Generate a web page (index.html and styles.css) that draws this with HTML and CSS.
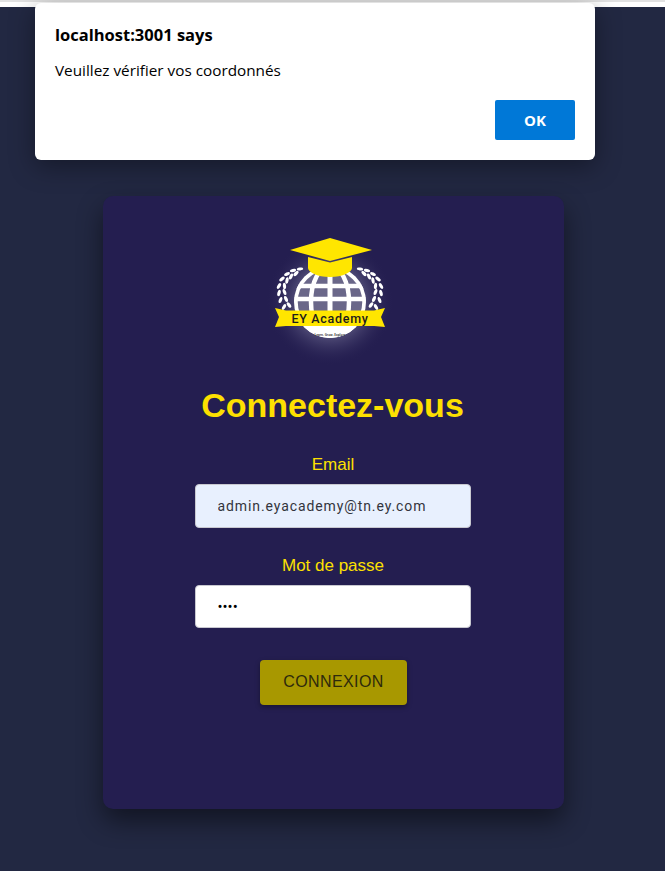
FILE: index.html

```html
<!DOCTYPE html>
<html lang="fr">
<head>
    <meta charset="UTF-8">
    <meta name="viewport" content="width=device-width, initial-scale=1.0">
    <title>EY Academy</title>
    <link rel="stylesheet" href="styles.css">
</head>
<body>
    <div class="browser-edge"></div>

    <div class="alert-box">
        <div class="alert-title">localhost:3001 says</div>
        <div class="alert-message">Veuillez vérifier vos coordonnés</div>
        <div class="alert-actions">
            <button class="alert-ok">OK</button>
        </div>
    </div>

    <main class="page">
        <form class="login-card">
            <svg class="logo" viewBox="0 0 120 118" width="120" height="118">
                <defs>
                    <radialGradient id="glow">
                        <stop offset="0" stop-color="#8a88a4" stop-opacity="0.85"/>
                        <stop offset="0.55" stop-color="#6f6c92" stop-opacity="0.55"/>
                        <stop offset="1" stop-color="#241e50" stop-opacity="0"/>
                    </radialGradient>
                    <clipPath id="globeClip">
                        <circle cx="58" cy="72" r="36"/>
                    </clipPath>
                    <g id="laurel" fill="#fff">
                        <ellipse cx="12" cy="77" rx="3.2" ry="1.6" transform="rotate(-60 12 77)"/>
                        <ellipse cx="17" cy="75" rx="3.2" ry="1.6" transform="rotate(-125 17 75)"/>
                        <ellipse cx="8.5" cy="70" rx="3.2" ry="1.6" transform="rotate(-70 8.5 70)"/>
                        <ellipse cx="14" cy="69" rx="3.2" ry="1.6" transform="rotate(-115 14 69)"/>
                        <ellipse cx="7" cy="63" rx="3.2" ry="1.6" transform="rotate(-75 7 63)"/>
                        <ellipse cx="12.5" cy="62" rx="3.2" ry="1.6" transform="rotate(-110 12.5 62)"/>
                        <ellipse cx="7" cy="56" rx="3.2" ry="1.6" transform="rotate(-60 7 56)"/>
                        <ellipse cx="12.5" cy="56" rx="3.2" ry="1.6" transform="rotate(-95 12.5 56)"/>
                        <ellipse cx="10" cy="49" rx="3.2" ry="1.6" transform="rotate(-40 10 49)"/>
                        <ellipse cx="15" cy="50.5" rx="3.2" ry="1.6" transform="rotate(-80 15 50.5)"/>
                        <ellipse cx="15" cy="44" rx="3.2" ry="1.6" transform="rotate(-25 15 44)"/>
                        <ellipse cx="19" cy="46.5" rx="3.2" ry="1.6" transform="rotate(-65 19 46.5)"/>
                        <ellipse cx="21" cy="40.5" rx="3.2" ry="1.6" transform="rotate(-15 21 40.5)"/>
                        <ellipse cx="24" cy="43.5" rx="3.2" ry="1.6" transform="rotate(-45 24 43.5)"/>
                        <ellipse cx="28" cy="39" rx="3.2" ry="1.4" transform="rotate(-10 28 39)"/>
                    </g>
                </defs>
                <circle cx="58" cy="72" r="64" fill="url(#glow)"/>
                <!-- globe -->
                <circle cx="58" cy="72" r="35" fill="#6a6789"/>
                <g clip-path="url(#globeClip)" fill="none" stroke="#fff">
                    <circle cx="58" cy="72" r="34.5" stroke-width="4.5"/>
                    <ellipse cx="58" cy="72" rx="19" ry="36" stroke-width="4.5"/>
                    <path d="M58 30V110" stroke-width="5"/>
                    <path d="M18 56H98M18 69H98" stroke-width="4.5"/>
                    <path d="M10 101H106" stroke-width="13"/>
                </g>
                <!-- laurels -->
                <use href="#laurel"/>
                <use href="#laurel" transform="translate(116) scale(-1 1)"/>
                <!-- cap -->
                <path d="M58 8L100 20L58 31L18 20Z" fill="#ffe600"/>
                <path d="M36 27L58 32.5L80 27V38C80 42 71 47 58 47C45 47 36 42 36 38Z" fill="#ffe600"/>
                <!-- ribbon -->
                <path d="M3 78L14 80.5H102L113 78L109 87L113 97L102 96H14L3 97L7 87Z" fill="#ffe600"/>
                <text class="logo-name" x="58" y="93" text-anchor="middle">EY Academy</text>
                <text class="logo-tag" x="58" y="106" text-anchor="middle">Learn. Grow. Explore</text>
            </svg>

            <h1 class="login-title">Connectez-vous</h1>

            <label class="field-label" for="email">Email</label>
            <input class="field-input field-filled" id="email" type="text" value="admin.eyacademy@tn.ey.com">

            <label class="field-label field-label-pass" for="password">Mot de passe</label>
            <input class="field-input field-pass" id="password" type="password" value="test">

            <button class="login-button" type="button">CONNEXION</button>
        </form>
    </main>
</body>
</html>
```

FILE: styles.css

```css
:root {
    --page-bg: #222842;
    --card-bg: #241e50;
    --yellow: #fde000;
}
body {
    margin: 0;
    background-color: var(--page-bg);
    font-family: "Liberation Sans", Arial, sans-serif;
}
.browser-edge {
    height: 7px;
    background-color: #fff;
    border-top: 2px solid #e2e2e2;
    box-sizing: border-box;
}
.page {
    display: flex;
    justify-content: center;
    padding: 189px 0 62px 2px;
}
.login-card {
    width: 461px;
    height: 613px;
    box-sizing: border-box;
    padding: 34px 2px 0 0;
    display: flex;
    flex-direction: column;
    align-items: center;
    background-color: var(--card-bg);
    border-radius: 10px;
    box-shadow: 0 12px 26px rgba(0, 0, 0, 0.48);
}
.logo {
    display: block;
    overflow: visible;
    margin-right: 2px;
}
.logo-name {
    font-family: Roboto, sans-serif;
    font-size: 12.5px;
    font-weight: 500;
    letter-spacing: 0.7px;
    fill: #1c1c1c;
}
.logo-tag {
    font-family: "Open Sans", sans-serif;
    font-size: 3px;
    font-weight: 700;
    fill: #444;
}
.login-title {
    margin: 38px 0 0;
    font-size: 34px;
    line-height: 39px;
    font-weight: 700;
    color: var(--yellow);
}
.field-label {
    margin-top: 31px;
    margin-left: 1px;
    font-size: 17px;
    line-height: 18px;
    color: var(--yellow);
}
.field-label-pass {
    margin-top: 29px;
}
.field-input {
    margin-top: 10px;
    width: 276px;
    box-sizing: border-box;
    padding: 0 22px;
    font-family: Roboto, sans-serif;
    font-size: 14px;
    letter-spacing: 0.9px;
    color: #33343c;
    background-color: #fff;
    border: 1px solid #c8c8d0;
    border-radius: 4px;
    outline: none;
}
.field-filled {
    height: 44px;
    background-color: #e8f0fe;
}
.field-pass {
    height: 43px;
    font-size: 15px;
    letter-spacing: 0;
    color: #000;
}
.login-button {
    margin: 32px 0 0 2px;
    width: 147px;
    height: 45px;
    padding-bottom: 3px;
    font-family: "Liberation Sans", Arial, sans-serif;
    font-size: 16px;
    letter-spacing: 0.4px;
    color: #2e2a0c;
    background-color: #a89800;
    border: none;
    border-radius: 4px;
    box-shadow: 0 2px 5px rgba(0, 0, 0, 0.35);
}
.alert-box {
    position: absolute;
    left: 35px;
    top: 3px;
    width: 560px;
    height: 157px;
    box-sizing: border-box;
    padding: 20px;
    background-color: #fff;
    border-radius: 6px;
    box-shadow: 0 6px 26px rgba(0, 0, 0, 0.38);
    font-family: "Open Sans", sans-serif;
    color: #000;
}
.alert-title {
    font-size: 16.5px;
    line-height: 24px;
    font-weight: 700;
}
.alert-message {
    margin-top: 13px;
    font-size: 15.3px;
    line-height: 21px;
}
.alert-actions {
    margin-top: 19px;
    display: flex;
    justify-content: flex-end;
}
.alert-ok {
    width: 80px;
    height: 40px;
    font-family: "Open Sans", sans-serif;
    font-size: 15px;
    font-weight: 700;
    color: #fff;
    background-color: #0078d7;
    border: none;
    border-radius: 2px;
}
```
